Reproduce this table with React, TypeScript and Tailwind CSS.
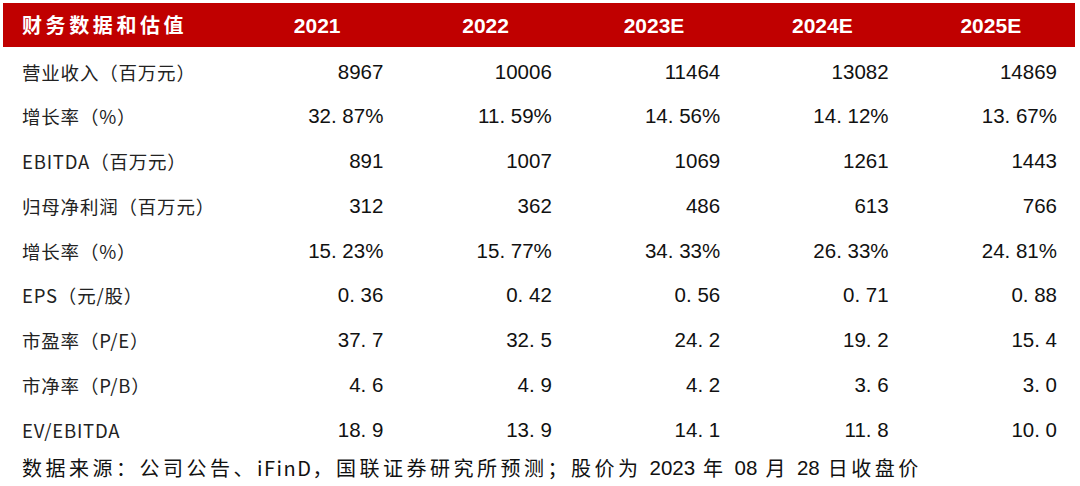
const years = ["2021", "2022", "2023E", "2024E", "2025E"];

const rows: { label: string; values: string[] }[] = [
  { label: "营业收入（百万元）", values: ["8967", "10006", "11464", "13082", "14869"] },
  { label: "增长率（%）", values: ["32.87%", "11.59%", "14.56%", "14.12%", "13.67%"] },
  { label: "EBITDA（百万元）", values: ["891", "1007", "1069", "1261", "1443"] },
  { label: "归母净利润（百万元）", values: ["312", "362", "486", "613", "766"] },
  { label: "增长率（%）", values: ["15.23%", "15.77%", "34.33%", "26.33%", "24.81%"] },
  { label: "EPS（元/股）", values: ["0.36", "0.42", "0.56", "0.71", "0.88"] },
  { label: "市盈率（P/E）", values: ["37.7", "32.5", "24.2", "19.2", "15.4"] },
  { label: "市净率（P/B）", values: ["4.6", "4.9", "4.2", "3.6", "3.0"] },
  { label: "EV/EBITDA", values: ["18.9", "13.9", "14.1", "11.8", "10.0"] },
];

// decimals in the source use a wide full stop, so pad the dot out to a digit's width
function Num({ v }: { v: string }) {
  const dot = v.indexOf(".");
  if (dot < 0) return <span>{v}</span>;
  return (
    <span>
      {v.slice(0, dot)}
      <span className="mr-[5.7px]">.</span>
      {v.slice(dot + 1)}
    </span>
  );
}

function Digits({ children }: { children: string }) {
  return <span className="tracking-normal font-['Liberation_Sans',sans-serif] text-[20.5px] mx-[8px]">{children}</span>;
}

export default function App() {
  return (
    <div className="w-[1080px] h-[486px] bg-white pl-[3px] pt-[3px] overflow-hidden">
      <div className="w-[1072px]">
        <div className="grid grid-cols-[230px_repeat(5,1fr)] h-[44px] bg-[#c00000] text-white items-center">
          <span className="pl-[19px] font-['Noto_Sans_CJK_SC',sans-serif] font-bold text-[20px] tracking-[3.6px] leading-none">
            财务数据和估值
          </span>
          {years.map((y) => (
            <span
              key={y}
              className="text-center font-['Liberation_Sans',sans-serif] font-bold text-[21px] leading-none pt-[1px]"
            >
              {y}
            </span>
          ))}
        </div>

        <div className="pt-[2.6px]">
          {rows.map((row, i) => (
            <div key={i} className="grid grid-cols-[230px_repeat(5,1fr)] h-[44.75px] items-center">
              <span className="pl-[19px] font-['Noto_Sans_CJK_SC',sans-serif] text-[18.5px] tracking-[0.8px] text-[#222] leading-none">
                {row.label}
              </span>
              {row.values.map((v, j) => (
                <span
                  key={j}
                  className="text-right pr-[18px] font-['Liberation_Sans',sans-serif] text-[20.5px] text-[#111] leading-none"
                >
                  <Num v={v} />
                </span>
              ))}
            </div>
          ))}
        </div>

        <div className="h-[32px] flex items-center pl-[19px] font-['Noto_Sans_CJK_SC',sans-serif] text-[20px] tracking-[3.5px] text-[#111] leading-none whitespace-nowrap">
          <span>
            数据来源：公司公告、<span className="tracking-[1.5px]">iFinD</span>，国联证券研究所预测；股价为
          </span>
          <Digits>2023</Digits>
          <span>年</span>
          <Digits>08</Digits>
          <span>月</span>
          <Digits>28</Digits>
          <span>日收盘价</span>
        </div>
      </div>
    </div>
  );
}
